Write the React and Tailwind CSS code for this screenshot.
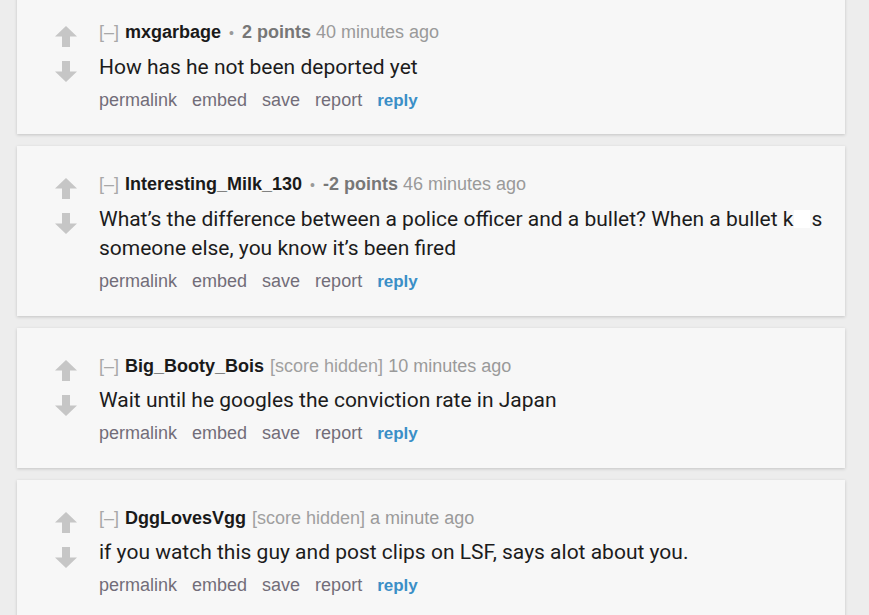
import React from 'react';

const comments = [
  {
    user: 'mxgarbage',
    score: '2 points',
    time: '40 minutes ago',
    body: 'How has he not been deported yet',
    first: true,
  },
  {
    user: 'Interesting_Milk_130',
    score: '-2 points',
    time: '46 minutes ago',
    body: (
      <>
        What’s the difference between a police officer and a bullet? When a bullet k
        <span className="inline-block w-[16px] h-[18px] bg-white align-[-2px] mx-[1px]" />
        s someone else, you know it’s been fired
      </>
    ),
  },
  {
    user: 'Big_Booty_Bois',
    time: '10 minutes ago',
    body: 'Wait until he googles the conviction rate in Japan',
  },
  {
    user: 'DggLovesVgg',
    time: 'a minute ago',
    body: 'if you watch this guy and post clips on LSF, says alot about you.',
  },
];

const Arrow = ({ down }) => (
  <svg width="22" height="21" viewBox="0 0 22 21" className={down ? 'rotate-180' : ''}>
    <path d="M11 0 L22 10.5 L15 10.5 L15 21 L7 21 L7 10.5 L0 10.5 Z" fill="#c6c6c6" />
  </svg>
);

const Comment = ({ c }) => (
  <div
    className={`flex bg-[#f7f7f7] pl-[37px] pr-[20px] pt-[26px] shadow-[0_1px_3px_rgba(0,0,0,0.18)] ${
      c.first ? 'mt-[-6px] pb-[22px]' : 'pb-[23px]'
    }`}
  >
    {/* votes */}
    <div className="flex flex-col items-center w-[24px] pt-[6px] gap-[14px] shrink-0">
      <Arrow />
      <Arrow down />
    </div>

    <div className="ml-[21px] flex-1 min-w-0">
      <div className="flex items-baseline text-[18px] leading-[24px] font-['Liberation_Sans',Arial,sans-serif]">
        <span className="text-[#a8a8a8]">[–]</span>
        <span className="ml-[6px] font-bold text-[#1a1a1a]">{c.user}</span>
        {c.score ? (
          <>
            <span className="mx-[8px] text-[#9a9a9a] text-[14px]">•</span>
            <span className="font-bold text-[#777]">{c.score}</span>
          </>
        ) : (
          <span className="ml-[6px] text-[#a0a0a0]">[score hidden]</span>
        )}
        <span className="ml-[5px] text-[#9a9a9a]">{c.time}</span>
      </div>

      <p className="mt-[8px] text-[21px] leading-[29px] text-[#1c1c1c] font-['Roboto',sans-serif]">
        {c.body}
      </p>

      <div className="mt-[6px] h-[24px] flex gap-[15px] text-[18px] leading-[24px] text-[#726d79] font-['Liberation_Sans',Arial,sans-serif]">
        <span>permalink</span>
        <span>embed</span>
        <span>save</span>
        <span>report</span>
        <span className="font-bold text-[17px] leading-[25px] text-[#3b8fc7]">reply</span>
      </div>
    </div>
  </div>
);

export default function App() {
  return (
    <div className="w-[869px] h-[615px] overflow-hidden bg-[#ededed]">
      <div className="ml-[17px] w-[828px] flex flex-col gap-[12px]">
        {comments.map((c) => (
          <Comment key={c.user} c={c} />
        ))}
      </div>
    </div>
  );
}
